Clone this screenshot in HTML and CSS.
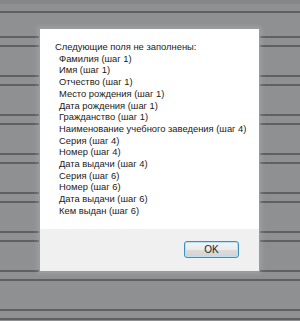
FILE: index.html
```html
<!DOCTYPE html>
<html>
<head>
<meta charset="utf-8">
<link rel="stylesheet" href="styles.css">
</head>
<body>
<div class="page">
  <div class="row r-top"></div>
  <div class="row r-first"></div>
  <div class="row r-s"></div><div class="row r-l"></div>
  <div class="row r-s"></div><div class="row r-l"></div>
  <div class="row r-s"></div><div class="row r-l"></div>
  <div class="row r-s"></div><div class="row r-l"></div>
  <div class="row r-s"></div><div class="row r-l"></div>
  <div class="row r-s"></div><div class="row r-l"></div>
  <div class="row r-s"></div><div class="row r-l"></div>
  <div class="row r-s"></div>
</div>
<div class="dialog">
  <div class="body">
    <div class="title">Следующие поля не заполнены:</div>
    <ul class="list">
      <li>Фамилия (шаг 1)</li>
      <li>Имя (шаг 1)</li>
      <li>Отчество (шаг 1)</li>
      <li>Место рождения (шаг 1)</li>
      <li>Дата рождения (шаг 1)</li>
      <li>Гражданство (шаг 1)</li>
      <li>Наименование учебного заведения (шаг 4)</li>
      <li>Серия (шаг 4)</li>
      <li>Номер (шаг 4)</li>
      <li>Дата выдачи (шаг 4)</li>
      <li>Серия (шаг 6)</li>
      <li>Номер (шаг 6)</li>
      <li>Дата выдачи (шаг 6)</li>
      <li>Кем выдан (шаг 6)</li>
    </ul>
  </div>
  <div class="footer">
    <button class="ok">OK</button>
  </div>
</div>
</body>
</html>
```
FILE: styles.css
```css
html, body {
  margin: 0;
  padding: 0;
  width: 300px;
  height: 321px;
  overflow: hidden;
  background: #8f9092;
}
.page {
  display: flex;
  flex-direction: column;
}
.row {
  border-bottom: 2px solid #5f6062;
  flex: none;
}
.r-top { height: 11px; background: linear-gradient(#858688 0, #858688 4px, #8f9092 4px); }
.r-first { height: 23px; }
.r-s { height: 7px; }
.r-l { height: 28px; }

.dialog {
  position: absolute;
  left: 40px;
  top: 29px;
  width: 219px;
  height: 242px;
  background: #fff;
  display: flex;
  flex-direction: column;
  box-shadow: 0 0 0 1px #9a9b9d, 0 0 5px 2px rgba(190,190,192,0.45);
  font-family: "Liberation Sans", Arial, sans-serif;
  font-size: 9.4px;
  color: #1a1a1a;
}
.body {
  flex: 1;
  padding: 12px 0 0 15px;
}
.title {
  line-height: 11.7px;
}
.list {
  list-style: none;
  margin: 0;
  padding: 0 0 0 4px;
}
.list li {
  line-height: 11.7px;
}
.footer {
  height: 42px;
  background: #f0f0f0;
  display: flex;
  justify-content: flex-end;
  align-items: flex-start;
  padding: 12px 20px 0 0;
  box-sizing: border-box;
}
.ok {
  width: 55px;
  height: 17px;
  margin: 0;
  padding: 0;
  border: 1px solid #3c8dc4;
  border-radius: 3px;
  background: linear-gradient(#f4f4f4 0%, #ebebeb 50%, #dcdcdc 51%, #d2d2d2 100%);
  box-shadow: inset 0 0 0 1px #b9e2f7;
  font-family: "Liberation Sans", Arial, sans-serif;
  font-size: 10px;
  color: #1a1a1a;
}
```
